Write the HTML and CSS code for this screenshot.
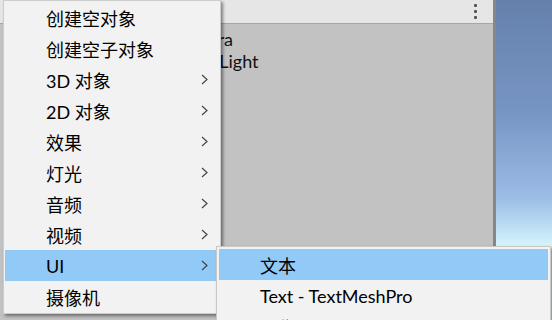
FILE: index.html
```html
<!DOCTYPE html>
<html lang="zh">
<head>
    <meta charset="UTF-8">
    <title>GameObject 菜单</title>
    <link rel="stylesheet" href="styles.css">
</head>
<body>
    <div class="desktop">
        <!-- 层级面板 -->
        <div class="hierarchy">
            <div class="panel-header">
                <span class="kebab"><i></i><i></i><i></i></span>
            </div>
            <div class="panel-body">
                <div class="row">Main Camera</div>
                <div class="row">Directional Light</div>
            </div>
        </div>
        <div class="divider"></div>
        <div class="sky"></div>

        <!-- 右键菜单 -->
        <ul class="menu">
            <li class="item">创建空对象</li>
            <li class="item">创建空子对象</li>
            <li class="item">3D 对象<svg class="arrow" viewBox="0 0 7 11"><polyline points="1,1 6,5.5 1,10"/></svg></li>
            <li class="item">2D 对象<svg class="arrow" viewBox="0 0 7 11"><polyline points="1,1 6,5.5 1,10"/></svg></li>
            <li class="item">效果<svg class="arrow" viewBox="0 0 7 11"><polyline points="1,1 6,5.5 1,10"/></svg></li>
            <li class="item">灯光<svg class="arrow" viewBox="0 0 7 11"><polyline points="1,1 6,5.5 1,10"/></svg></li>
            <li class="item">音频<svg class="arrow" viewBox="0 0 7 11"><polyline points="1,1 6,5.5 1,10"/></svg></li>
            <li class="item">视频<svg class="arrow" viewBox="0 0 7 11"><polyline points="1,1 6,5.5 1,10"/></svg></li>
            <li class="item active">UI<svg class="arrow" viewBox="0 0 7 11"><polyline points="1,1 6,5.5 1,10"/></svg>
                <ul class="menu submenu">
                    <li class="item active">文本</li>
                    <li class="item">Text - TextMeshPro</li>
                    <li class="item">图像</li>
                </ul>
            </li>
            <li class="item">摄像机</li>
        </ul>
    </div>
</body>
</html>
```

FILE: styles.css
```css
body {
    margin: 0;
    font-family: Lato, "Noto Sans CJK SC", sans-serif;
    background-color: #c2c2c2;
}
.desktop {
    position: relative;
    width: 552px;
    height: 320px;
    overflow: hidden;
    display: flex;
}
.hierarchy {
    width: 493px;
    display: flex;
    flex-direction: column;
    background-color: #c2c2c2;
}
.panel-header {
    height: 23px;
    background-color: #e6e6e6;
    border-bottom: 1px solid #a6a6a6;
    display: flex;
    justify-content: flex-end;
    align-items: center;
    padding-right: 16px;
}
.kebab {
    display: flex;
    flex-direction: column;
    gap: 3px;
}
.kebab i {
    width: 3px;
    height: 3px;
    border-radius: 1px;
    background-color: #555;
}
.panel-body {
    padding-top: 4px;
    padding-left: 128px;
    font-size: 18px;
    color: #111;
}
.row {
    height: 22px;
    line-height: 22px;
}
.divider {
    width: 3px;
    background-color: #878787;
}
.sky {
    flex: 1;
    background: linear-gradient(#6580ab 0%, #7795c4 35%, #9cbde6 62%, #c8eaf8 74%, #eafeff 80%, #f4ffff 100%);
}
.menu {
    position: absolute;
    left: 3px;
    top: 0;
    width: 214px;
    margin: 0;
    padding: 1px;
    list-style: none;
    background-color: #f2f2f2;
    border: 1px solid #cdcdcd;
    box-shadow: 2px 2px 3px rgba(0,0,0,0.45);
    font-size: 18px;
    color: #000;
}
.item {
    position: relative;
    height: 31px;
    display: flex;
    align-items: center;
    padding: 0 11px 0 41px;
}
.item.active {
    background-color: #91c9f7;
}
.arrow {
    width: 7px;
    height: 11px;
    margin-left: auto;
    fill: none;
    stroke: #444;
    stroke-width: 1.2;
}
.submenu {
    left: 211px;
    top: -4px;
    width: 329px;
    padding: 2px;
    border-color: #c8c8c8;
}
```
